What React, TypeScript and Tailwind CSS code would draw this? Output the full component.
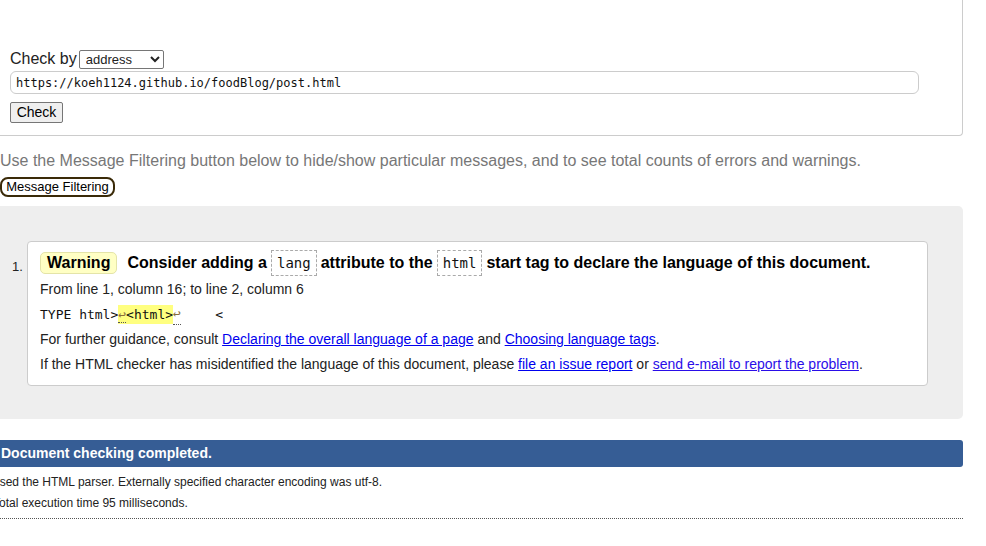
import React from "react";

const mono = { fontFamily: '"DejaVu Sans Mono", "Liberation Mono", monospace' };

export default function App() {
  return (
    <div
      className="w-[986px] h-[546px] overflow-hidden bg-white text-black"
      style={{ fontFamily: '"Liberation Sans", Arial, sans-serif' }}
    >
      {/* top form box */}
      <div className="w-[963px] h-[136px] border-r border-b border-[#cccccc] rounded-br-[4px] pt-[49px] pl-[10px]">
        <div className="flex items-center h-[20px] text-[16px] text-[#222]">
          <span>Check by</span>
          <select
            className="ml-[2px] h-[19px] w-[85px] border border-[#767676] rounded-[2px] text-[13px] bg-white pl-[2px]"
            defaultValue="address"
          >
            <option value="address">address</option>
          </select>
        </div>
        <div
          className="mt-[2px] w-[909px] h-[23px] border border-[#cccccc] rounded-[6px] flex items-center pl-[5px] text-[12px] text-[#111]"
          style={mono}
        >
          https://koeh1124.github.io/foodBlog/post.html
        </div>
        <button className="mt-[8px] h-[21px] w-[53px] border border-[#767676] rounded-[2px] bg-[#efefef] text-[14px] flex items-center justify-center">
          Check
        </button>
      </div>

      <p className="mt-[16px] text-[16px] leading-[18px] text-[#777777] whitespace-nowrap">
        Use the Message Filtering button below to hide/show particular messages, and to see total counts of errors and warnings.
      </p>
      <button className="mt-[7px] h-[20px] w-[115px] border-2 border-[#3a2a08] rounded-[8px] text-[13px] leading-[14px] flex items-center justify-center bg-white">
        Message Filtering
      </button>

      {/* results */}
      <div className="mt-[9px] w-[963px] h-[213px] bg-[#eeeeee] rounded-r-[5px] pt-[35px] flex">
        <div className="w-[27px] pl-[12px] pt-[16px] text-[13px] text-[#222]">1.</div>
        <div className="w-[901px] h-[145px] bg-white border border-[#cccccc] rounded-[4px] pt-[7px] pl-[12px] text-[14px] text-[#222]">
          <div className="flex items-center h-[28px] text-[16px] font-bold text-black whitespace-nowrap">
            <span className="h-[22px] px-[6px] bg-[#ffffc4] border border-[#e4e4a8] rounded-[5px] flex items-center">
              Warning
            </span>
            <span className="ml-[10px]">Consider adding a</span>
            <code
              className="mx-[4px] h-[26px] px-[5px] border border-dashed border-[#aaaaaa] flex items-center text-[14px] font-normal text-[#111]"
              style={mono}
            >
              lang
            </code>
            <span>attribute to the</span>
            <code
              className="mx-[4px] h-[26px] px-[5px] border border-dashed border-[#aaaaaa] flex items-center text-[14px] font-normal text-[#111]"
              style={mono}
            >
              html
            </code>
            <span>start tag to declare the language of this document.</span>
          </div>
          <div className="h-[25px] flex items-center">From line 1, column 16; to line 2, column 6</div>
          <div className="h-[25px] flex items-center text-[13px] whitespace-pre text-[#111]" style={mono}>
            <span>TYPE html&gt;</span>
            <span className="bg-[#ffff80]">
              <span className="text-[#8a6d3b] border-b border-dotted border-[#555]">↩</span>
              &lt;html&gt;
            </span>
            <span className="text-[#8a6d3b] border-b border-dotted border-[#555]">↩</span>
            <span className="ml-[3px]">{"    <"}</span>
          </div>
          <div className="h-[25px] flex items-center whitespace-pre">
            <span>For further guidance, consult </span>
            <a className="text-[#0000ee] underline">Declaring the overall language of a page</a>
            <span> and </span>
            <a className="text-[#0000ee] underline">Choosing language tags</a>
            <span>.</span>
          </div>
          <div className="h-[25px] flex items-center whitespace-pre">
            <span>If the HTML checker has misidentified the language of this document, please </span>
            <a className="text-[#0000ee] underline">file an issue report</a>
            <span> or </span>
            <a className="text-[#2a0de8] underline">send e-mail to report the problem</a>
            <span>.</span>
          </div>
        </div>
      </div>

      <div className="mt-[21px] w-[963px] h-[27px] bg-[#365d95] rounded-r-[3px] flex items-center pl-[1px] text-[14px] font-bold text-white">
        Document checking completed.
      </div>
      <div className="w-[963px] overflow-hidden text-[12px] text-[#222] pt-[6px]">
        <p className="h-[18px] leading-[18px] -ml-[9px] whitespace-nowrap">
          Used the HTML parser. Externally specified character encoding was utf-8.
        </p>
        <p className="mt-[3px] h-[18px] leading-[18px] -ml-[7px] whitespace-nowrap">
          Total execution time 95 milliseconds.
        </p>
        <div className="mt-[6px] border-b border-dotted border-[#555]"></div>
      </div>
    </div>
  );
}
